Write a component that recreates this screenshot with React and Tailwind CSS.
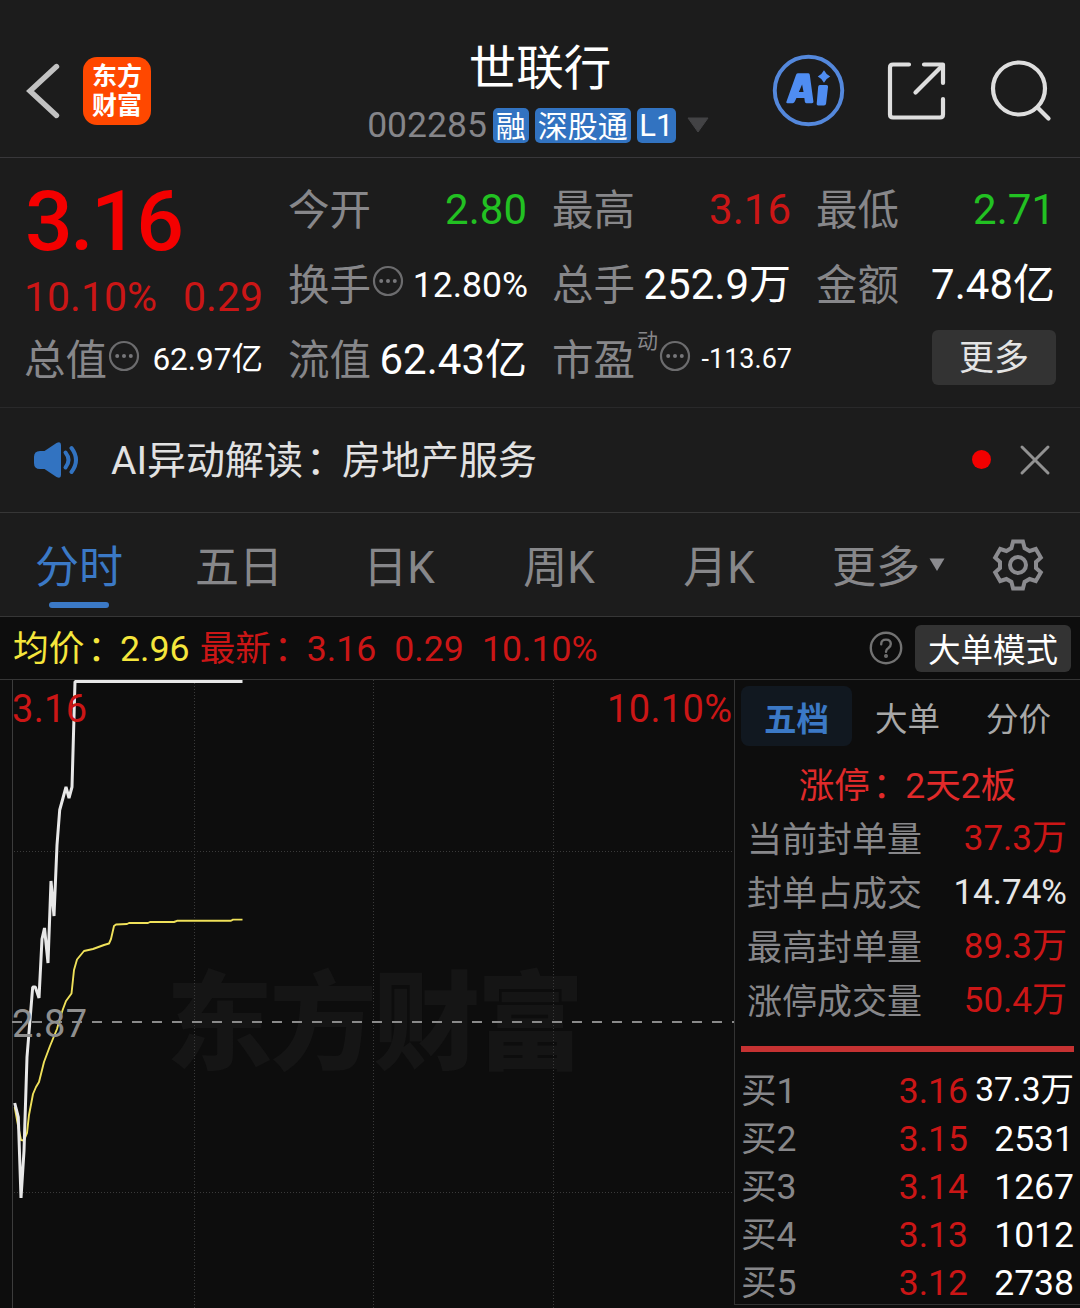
const ICON_GRAY = "#8b8b8f";

const TABS = ["分时", "五日", "日K", "周K", "月K"];

const SEAL_ROWS = [
  { label: "当前封单量", value: "37.3万", color: "text-[#cb1616]" },
  { label: "封单占成交", value: "14.74%", color: "text-[#e6e6e6]" },
  { label: "最高封单量", value: "89.3万", color: "text-[#cb1616]" },
  { label: "涨停成交量", value: "50.4万", color: "text-[#cb1616]" },
];

// Long volumes are set a little smaller so they fit the column
const BIDS = [
  { label: "买1", price: "3.16", volume: "37.3万", size: "text-[33.5px] leading-[48px]" },
  { label: "买2", price: "3.15", volume: "2531", size: "" },
  { label: "买3", price: "3.14", volume: "1267", size: "" },
  { label: "买4", price: "3.13", volume: "1012", size: "" },
  { label: "买5", price: "3.12", volume: "2738", size: "" },
];

// Chart coordinates, origin at the top left of the chart panel
const PRICE_POINTS =
  "14.7,423 18.3,437 21,518 24,471 27,377 30,340 32.7,307 35.3,307 39,318 42,259 44.5,248 48,283 51,201 54,236 57,165 59.7,130 63,118 66,107 69,118 72,107 75,1.5 242.5,1.5";
const AVG_POINTS =
  "14.7,427 18.3,447 21,460 24,460.5 27,453 29,435 33,414 36,407 39,402 44,382 50,366 57,349 60,338 63,329 66,321 71.5,313.5 74,290 77,279.5 84,271 93,269 104,265 109,263.5 111,259 114,246 116,244.5 127,244 129,243 148,243 150,242 174,242 177,240.8 231,240.8 233,239.6 242.5,239.6";

function MoreDots() {
  return (
    <svg className="w-8 h-8 shrink-0" viewBox="0 0 32 32" fill="none">
      <circle cx="16" cy="16" r="14" stroke="#6c6c6e" strokeWidth="2.2" />
      <circle cx="9.2" cy="16" r="2" fill="#77777a" />
      <circle cx="16" cy="16" r="2" fill="#77777a" />
      <circle cx="22.8" cy="16" r="2" fill="#77777a" />
    </svg>
  );
}

// Full-width colon, nudged towards the middle of its cell
function Colon() {
  return <span className="pl-[3px] -mr-[3px]">：</span>;
}

function Header() {
  return (
    <header className="h-[158px] grid grid-cols-[360px_1fr_360px] border-b border-[#38373a]">
      <div className="flex items-center gap-[22px] pl-[25px] pt-[24px]">
        <svg className="w-9 h-[60px]" viewBox="0 0 36 60" fill="none">
          <path d="M31.5 5.5L5 30L31.5 54.5" stroke="#c2c2c2" strokeWidth="5.4" strokeLinecap="round" strokeLinejoin="miter" />
        </svg>
        <div className="w-[68px] h-[68px] rounded-[14px] bg-[#ff4800] flex flex-col items-center justify-center text-white text-[25px] leading-[29px] font-bold">
          <span>东方</span>
          <span>财富</span>
        </div>
      </div>

      <div className="flex flex-col items-center pt-[44px]">
        <h1 className="text-[47.5px] leading-[50px] text-white">世联行</h1>
        <div className="flex items-center gap-1.5 mt-[13px] -ml-1 whitespace-nowrap">
          <span className="text-[35.5px] leading-[36px] text-[#858589]">002285</span>
          <span className="h-[35px] px-[3px] rounded-[5px] bg-[#3273c1] text-white text-[30px] leading-[37px]">融</span>
          <span className="h-[35px] px-[3px] rounded-[5px] bg-[#3273c1] text-white text-[30px] leading-[37px]">深股通</span>
          <span className="h-[35px] w-[39px] text-center rounded-[5px] bg-[#3273c1] text-white text-[31px] leading-[35px]">L1</span>
          <svg className="w-[22px] h-4 ml-[5px]" viewBox="0 0 22 16">
            <path d="M1 1H21L11 15Z" fill="#434345" stroke="#434345" strokeLinejoin="round" />
          </svg>
        </div>
      </div>

      <div className="flex items-center pt-[24px] pl-[52px]">
        <svg className="w-[73px] h-[73px]" viewBox="0 0 74 74" fill="none">
          <circle cx="37" cy="37" r="34.2" stroke="#5488dc" strokeWidth="4" />
          <path
            fillRule="evenodd"
            d="M26.5 19.5H36.5Q38 19.5 38.3 21L42 48.5Q42.2 50 40.5 50H34.8Q33.5 50 33.3 48.5L32.8 44.5H24.8L23 48.5Q22.3 50 21 50H15.5Q14 50 14.6 48.5L24.4 21Q25 19.5 26.5 19.5ZM30.5 31L27.2 38.5H32Z"
            fill="#4f8df2"
          />
          <path d="M48.5 31.5H55.2Q57 31.5 56.8 33.3L54.8 50.5Q54.5 52.3 52.7 52.3H46.8Q45 52.3 45.3 50.5L46.8 33.3Q47 31.5 48.5 31.5Z" fill="#4f8df2" />
          <path d="M52.7 16.5Q54.8 20.7 59 22.8Q54.8 24.9 52.7 29.1Q50.6 24.9 46.4 22.8Q50.6 20.7 52.7 16.5Z" fill="#4f8df2" />
        </svg>
        <svg className="w-[60px] h-[60px] ml-[42px]" viewBox="0 0 60 60" fill="none" stroke="#dedede" strokeWidth="4.2" strokeLinecap="round" strokeLinejoin="round">
          <path d="M22 3.5H6Q3 3.5 3 6.5V53.5Q3 56.5 6 56.5H53Q56 56.5 56 53.5V38" />
          <path d="M37 3.5H56V22" />
          <path d="M28.5 31.5L55 5" />
        </svg>
        <svg className="w-[62px] h-[62px] ml-[43px]" viewBox="0 0 62 62" fill="none" stroke="#dedede" strokeWidth="4.2" strokeLinecap="round">
          <circle cx="29" cy="28.5" r="26" />
          <path d="M47.5 47.5L58.5 58.5" />
        </svg>
      </div>
    </header>
  );
}

function Quote({ label, value, valueClass, children }) {
  return (
    <div className="flex items-center justify-between whitespace-nowrap">
      <span className="-ml-px flex items-center text-[41.5px] leading-[48px] text-[#87878a]">
        <span className="pt-[3px]">{label}</span>
        {children}
      </span>
      <span className={valueClass}>{value}</span>
    </div>
  );
}

function QuotePanel() {
  return (
    <section className="h-[250px] pt-[14px] px-[25px] grid grid-cols-[238px_238px_238px_238px] auto-rows-[75px] gap-x-[26px] border-b border-[#29292a]">
      <div className="row-span-2 text-[#cb1616]">
        <div className="pt-[8px] text-[84px] leading-[84px] tracking-[-2.5px] font-medium text-[#f40000]">3.16</div>
        <div className="mt-[9px] -ml-px flex justify-between text-[41px] leading-[48px]">
          <span>10.10%</span>
          <span>0.29</span>
        </div>
      </div>
      <Quote label="今开" value="2.80" valueClass="text-[42px] leading-[48px] text-[#22c122]" />
      <Quote label="最高" value="3.16" valueClass="text-[42px] leading-[48px] text-[#cb1616]" />
      <Quote label="最低" value="2.71" valueClass="text-[42px] leading-[48px] text-[#22c122]" />
      <Quote label="换手" value="12.80%" valueClass="-mr-px text-[35.5px] leading-[40px] text-white">
        <span className="-mt-[7px] ml-[1px]"><MoreDots /></span>
      </Quote>
      <Quote label="总手" value="252.9万" valueClass="text-[42px] leading-[48px] text-white" />
      <Quote label="金额" value="7.48亿" valueClass="text-[42px] leading-[48px] text-white" />
      <Quote label="总值" value="62.97亿" valueClass="text-[31.5px] leading-[36px] text-white">
        <span className="-mt-[7px] ml-[1px]"><MoreDots /></span>
      </Quote>
      <Quote label="流值" value="62.43亿" valueClass="text-[42px] leading-[48px] text-white" />
      <Quote label="市盈" value="-113.67" valueClass="-mr-px pb-px text-[27px] leading-[36px] text-white">
        <span className="-mt-[38px] ml-[2px] text-[21px] leading-[24px]">动</span>
        <span className="-mt-[7px] ml-[1px]"><MoreDots /></span>
      </Quote>
      <div className="flex items-center justify-end pb-[5px] -mr-[1px]">
        <button className="w-[124px] h-[55px] rounded-md bg-[#333333] text-[35px] leading-[58px] text-[#e4e4e4]">更多</button>
      </div>
    </section>
  );
}

function Notice() {
  return (
    <section className="h-[105px] flex items-center pl-[33px] pr-[29px] pb-px border-b border-[#363636]">
      <svg className="w-[46px] h-[38px]" viewBox="0 0 46 38" fill="none">
        <path d="M7 10H11.5L23.5 2Q28 -0.2 28 4V34Q28 38.2 23.5 36L11.5 28H7Q1 28 1 22V16Q1 10 7 10Z" fill="#3273c1" />
        <path d="M32.5 11.5Q38.5 19 32.5 26.5" stroke="#3273c1" strokeWidth="4" strokeLinecap="round" />
        <path d="M38.5 7Q47.5 19 38.5 31" stroke="#3273c1" strokeWidth="4" strokeLinecap="round" />
      </svg>
      <p className="flex-1 pl-[32px] pt-[3px] text-[39px] leading-[48px] text-[#e2e2e2]">
        AI异动解读<Colon />房地产服务
      </p>
      <span className="w-[19px] h-[19px] rounded-full bg-[#f20000] mr-[28px]" />
      <svg className="w-8 h-8" viewBox="0 0 32 32" stroke="#929292" strokeWidth="3" strokeLinecap="round">
        <path d="M3 3L29 29M29 3L3 29" />
      </svg>
    </section>
  );
}

function PeriodTabs() {
  return (
    <nav className="h-[104px] flex border-b border-[#363636] text-[44px] leading-[50px] text-[#87878a]">
      {TABS.map((tab, i) => (
        <div key={tab} className={`w-[160px] flex flex-col items-center pt-[30px] pr-[2px] ${i === 0 ? "text-[#3b79c6]" : ""}`}>
          <span>{tab}</span>
          {i === 0 && <span className="mt-[9px] w-[60px] h-[6px] rounded-full bg-[#3b79c6]" />}
        </div>
      ))}
      <div className="flex items-start pt-[30px] pl-[32px]">
        更多
        <svg className="w-4 h-[13px] mt-[15px] ml-[9px]" viewBox="0 0 16 13">
          <path d="M0.5 0.5H15.5L8 13Z" fill={ICON_GRAY} />
        </svg>
      </div>
      <svg className="w-[54px] h-[54px] mt-[25px] ml-[46px]" viewBox="-27 -27 54 54" fill="none" stroke={ICON_GRAY} strokeWidth="4">
        <path d="M-4.9 -23.5H4.9L6.6 -16.9L11.6 -14L17.8 -16L22.8 -7.4L18 -3V3L22.8 7.4L17.8 16L11.6 14L6.6 16.9L4.9 23.5H-4.9L-6.6 16.9L-11.6 14L-17.8 16L-22.8 7.4L-18 3V-3L-22.8 -7.4L-17.8 -16L-11.6 -14L-6.6 -16.9Z" />
        <circle r="8" />
      </svg>
    </nav>
  );
}

function InfoBar() {
  return (
    <div className="h-[63px] flex items-center pl-[13px] pr-[9px] bg-[#0d0d0d] border-b border-[#363636] text-[35.7px] leading-[48px] whitespace-nowrap">
      <span className="pt-[2px] text-[#f5e63c]">均价<Colon />2.96</span>
      <span className="pt-[2px] ml-[10px] text-[#cb1616]">最新<Colon />3.16</span>
      <span className="pt-[2px] ml-[18px] text-[#cb1616]">0.29</span>
      <span className="pt-[2px] ml-[18px] text-[#cb1616]">10.10%</span>
      <svg className="w-[34px] h-[34px] ml-auto" viewBox="0 0 34 34" fill="none" stroke="#727272" strokeWidth="2.4" strokeLinecap="round">
        <circle cx="17" cy="17" r="15.2" />
        <path d="M12.2 13.2Q12.2 8.6 17 8.6Q21.8 8.6 21.8 13Q21.8 15.2 19.4 16.9Q17 18.4 17 20.8" />
        <circle cx="17" cy="25" r="0.8" fill="#727272" />
      </svg>
      <button className="ml-[12px] w-[156px] h-[47px] rounded-md bg-[#333333] text-white text-[32.5px] leading-[53px]">大单模式</button>
    </div>
  );
}

function Chart() {
  return (
    <svg className="w-[734px] h-[628px] shrink-0" viewBox="0 0 734 628" fill="none">
      <text x="375" y="381" textAnchor="middle" textLength="418" fontSize="107" fontWeight="900" fill="#151515">
        东方财富
      </text>
      <path d="M12.5 0V628" stroke="#3c3c3c" />
      <path d="M194.5 0V628M373.5 0V628M553.5 0V628M14 171.5H734M14 512.5H734" stroke="#3a3a3a" strokeDasharray="1 2" />
      <path d="M12 342H734" stroke="#8a8a8a" strokeWidth="1.8" strokeDasharray="10 10" />
      <polyline points={AVG_POINTS} stroke="#efe15a" strokeWidth="1.9" strokeLinejoin="round" />
      <polyline points={PRICE_POINTS} stroke="#e8e8e8" strokeWidth="3" strokeLinejoin="bevel" />
      <g fontSize="38">
        <text x="12" y="42" fill="#cb1616" textLength="75">3.16</text>
        <text x="607" y="42" fill="#cb1616" textLength="125">10.10%</text>
        <text x="12" y="357" fill="#8f8f8f" textLength="75">2.87</text>
      </g>
    </svg>
  );
}

function OrderBook() {
  return (
    <aside className="flex-1 h-[625px] border-l border-b border-[#333333] px-[6px] pt-[6px]">
      <div className="grid grid-cols-3 grid-rows-[60px] text-center text-[32.5px] leading-[68px] text-[#a8a8a8]">
        <span className="rounded-lg bg-[#111820] text-[#3b79c6] font-bold">五档</span>
        <span>大单</span>
        <span>分价</span>
      </div>

      <div className="mt-[12px] h-[54px] text-center text-[35.5px] leading-[56px] text-[#e02a2a]">
        涨停<Colon />2天2板
      </div>
      {SEAL_ROWS.map((row) => (
        <div key={row.label} className="h-[54px] flex justify-between pl-[6px] pr-[7px] text-[35px] leading-[54px]">
          <span className="pt-[2px] text-[#87878a]">{row.label}</span>
          <span className={row.color}>{row.value}</span>
        </div>
      ))}

      <div className="mt-[18px] mb-[14px] h-[6px] bg-[#c53232]" />
      {BIDS.map((bid) => (
        <div key={bid.label} className="h-[48px] grid grid-cols-[1fr_70px_106px] text-right text-[35.5px] leading-[50px] whitespace-nowrap">
          <span className="text-left text-[#87878a]">{bid.label}</span>
          <span className="text-[#cb1616]">{bid.price}</span>
          <span className={`text-white ${bid.size}`}>{bid.volume}</span>
        </div>
      ))}
    </aside>
  );
}

export default function App() {
  return (
    <div className="w-[1080px] h-[1308px] overflow-hidden bg-[#1c1c1c] font-['Roboto','Noto_Sans_CJK_SC',sans-serif]">
      <Header />
      <QuotePanel />
      <Notice />
      <PeriodTabs />
      <InfoBar />
      <main className="flex h-[628px] bg-[#0d0d0d]">
        <Chart />
        <OrderBook />
      </main>
    </div>
  );
}
